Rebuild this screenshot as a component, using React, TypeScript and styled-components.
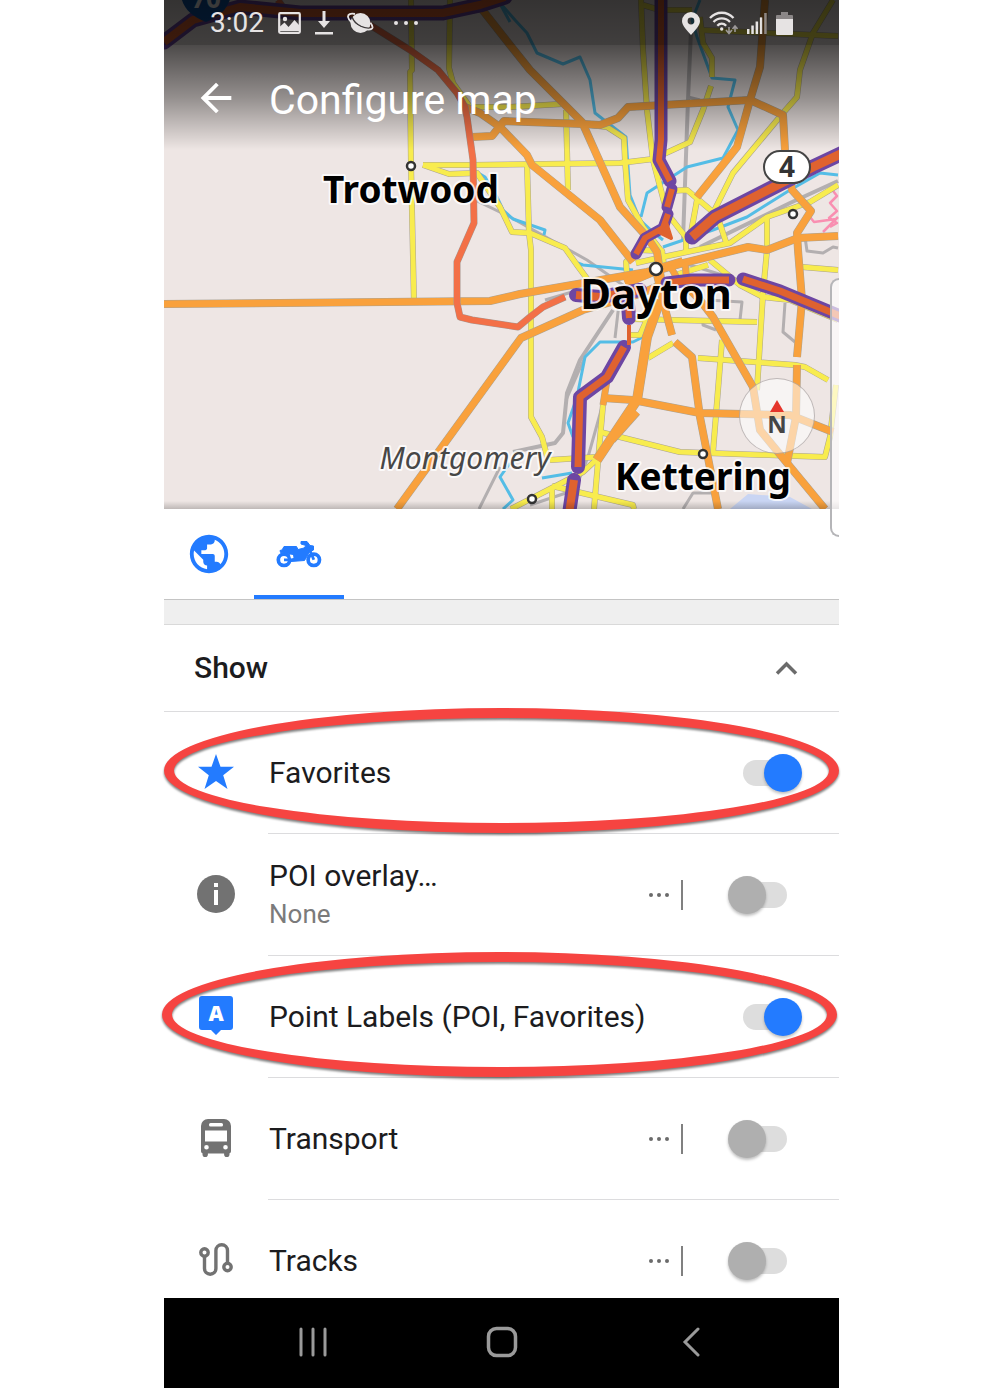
import React, { useState } from "react";
import styled, { createGlobalStyle } from "styled-components";
import { MdArrowBack, MdPublic } from "react-icons/md";

const GlobalStyle = createGlobalStyle`
  *, *::before, *::after { box-sizing: border-box; }
  body { margin: 0; background: #fff; }
  button { border: 0; padding: 0; background: none; font: inherit; color: inherit; cursor: pointer; }
  h1, h2 { margin: 0; font-weight: 400; }
`;

const Page = styled.div`
  height: 100vh;
  padding: 0 161px 0 164px;
  font-family: Roboto, "Noto Sans", sans-serif;
  color: #1c1c1e;

  @media (max-width: 700px) {
    padding: 0;
  }
`;

const Phone = styled.main`
  position: relative;
  display: flex;
  flex-direction: column;
  height: 100%;
  background: #fff;
`;

/* ---------- map ---------- */

const MapArea = styled.header`
  position: relative;
  flex: none;
  height: 509px;
  overflow: hidden;
  background: #eee6e4;
`;

const MapDrawing = styled.svg`
  position: absolute;
  inset: 0;
  width: 100%;
  height: 100%;
`;

const MapShade = styled.div`
  position: absolute;
  inset: 0;
  background:
    linear-gradient(rgba(0, 0, 0, 0.78), rgba(0, 0, 0, 0.73)) 0 0 / 100% 45px no-repeat,
    linear-gradient(rgba(0, 0, 0, 0.68), rgba(0, 0, 0, 0.38) 50%, rgba(0, 0, 0, 0)) 0 45px / 100% 105px no-repeat,
    linear-gradient(rgba(0, 0, 0, 0), rgba(0, 0, 0, 0.2)) 0 100% / 100% 8px no-repeat;
`;

const StatusBar = styled.div`
  position: relative;
  display: flex;
  align-items: center;
  justify-content: space-between;
  height: 46px;
  padding: 0 46px;
  color: #e6e3e3;
  font-size: 28px;
  line-height: 46px;
`;

const StatusGroup = styled.div<{ $gap: number }>`
  display: flex;
  align-items: center;
  gap: ${(p) => p.$gap}px;

  svg { display: block; }
`;

const StatusMore = styled.span`
  padding-left: 6px;
`;

const AppBar = styled.div`
  position: relative;
  display: flex;
  align-items: center;
  gap: 30px;
  height: 103px;
  padding-left: 29px;
  color: #fff;
`;

const BackButton = styled.button`
  display: grid;
  place-items: center;
  width: 46px;
  height: 46px;
`;

const Title = styled.h1`
  padding-top: 4px;
  font-size: 41px;
  line-height: 50px;
`;

const Compass = styled.button`
  position: absolute;
  right: 24px;
  top: 378px;
  width: 76px;
  height: 76px;
  padding-top: 4px;
  border: 1px solid rgba(120, 110, 110, 0.45);
  border-radius: 50%;
  background: rgba(255, 255, 255, 0.55);
  display: flex;
  flex-direction: column;
  align-items: center;
  justify-content: center;
  color: #454545;
  font: 700 24px/24px "Open Sans", "Noto Sans", sans-serif;
`;

const Needle = styled.span`
  border: 7px solid transparent;
  border-top: 0;
  border-bottom: 12px solid #e5352b;
`;

const EdgePanel = styled.div`
  position: absolute;
  right: 0;
  top: 278px;
  width: 9px;
  height: 259px;
  border: 2px solid #b5b5b8;
  border-right: 0;
  border-radius: 10px 0 0 10px;
  background: rgba(255, 255, 255, 0.65);
`;

/* ---------- profile tabs ---------- */

const Tabs = styled.nav`
  flex: none;
  display: flex;
  height: 91px;
  border-bottom: 1px solid #c4c4c4;
`;

const Tab = styled.button<{ $active: boolean }>`
  display: grid;
  place-items: center;
  width: 90px;
  border-top: 4px solid transparent;
  border-bottom: 4px solid ${(p) => (p.$active ? "#237bff" : "transparent")};
  color: #237bff;
`;

const Divider = styled.div`
  flex: none;
  height: 25px;
  background: #efefef;
  border-bottom: 1px solid #d9d9d9;
`;

/* ---------- list ---------- */

const SectionHeader = styled.button`
  flex: none;
  display: flex;
  align-items: center;
  justify-content: space-between;
  height: 87px;
  padding: 0 41px 0 30px;
  border-bottom: 1px solid #dcdcde;
  text-align: left;
`;

const SectionTitle = styled.h2`
  font-size: 30px;
  line-height: 38px;
  font-weight: 500;
`;

const List = styled.div`
  flex: 1;
  min-height: 0;
  overflow: clip;
  overflow-clip-margin: 6px;
`;

const Row = styled.div`
  position: relative;
  display: flex;
  height: 122px;
`;

const IconCell = styled.div<{ $on: boolean }>`
  flex: none;
  display: grid;
  place-items: center;
  width: 104px;
  padding-bottom: 2px;
  color: ${(p) => (p.$on ? "#237bff" : "#727272")};
`;

const RowBody = styled.div`
  flex: 1;
  display: flex;
  align-items: center;
  padding: 0 37px 0 1px;
  border-bottom: 1px solid #dcdcde;
`;

const RowLabel = styled.label`
  flex: 1;
  font-size: 30px;
  line-height: 38px;
`;

const RowNote = styled.span`
  display: block;
  color: #7b7b7b;
  font-size: 26px;
`;

const MoreButton = styled.button`
  display: flex;
  align-items: center;
  justify-content: space-between;
  width: 34px;
  height: 30px;
  margin-right: 45px;
  border-right: 2px solid #808080;
  color: #6b6b6b;
`;

const Switch = styled.input`
  appearance: none;
  position: relative;
  width: 74px;
  height: 38px;
  margin: 0;
  cursor: pointer;

  &::before {
    content: "";
    position: absolute;
    inset: 6px 15px;
    border-radius: 13px;
    background: #dddddd;
  }

  &::after {
    content: "";
    position: absolute;
    left: 0;
    top: 0;
    width: 38px;
    height: 38px;
    border-radius: 50%;
    background: #afafaf;
    box-shadow: 0 2px 3px rgba(0, 0, 0, 0.25);
  }

  &:checked::after {
    left: 36px;
    background: #237bff;
  }
`;

const Highlight = styled.div<{ $shift: number }>`
  position: absolute;
  z-index: 1;
  top: -4px;
  left: ${(p) => -p.$shift}px;
  right: ${(p) => p.$shift}px;
  height: 125px;
  border: 10px solid #f64441;
  border-radius: 50%;
  filter: drop-shadow(0 2px 1px rgba(0, 0, 0, 0.5));
  pointer-events: none;
`;

/* ---------- system navigation ---------- */

const NavBar = styled.nav`
  position: relative;
  z-index: 2;
  flex: none;
  display: flex;
  justify-content: center;
  height: 90px;
  background: #000;
`;

const NavButton = styled.button`
  display: grid;
  place-items: center;
  width: 189px;
  padding-bottom: 2px;
  color: #9a9a9a;
`;

/* ---------- map data ---------- */

type Road = [points: string, width?: number];

const yellow: Road[] = [
  ["411,0 412,70 410,72 411,165 414,303"],
  ["450,0 449,68 453,83 470,107 510,107 562,104"],
  ["423,165 473,165 620,163 653,159 690,142 703,110 711,86"],
  ["423,165 449,174 477,173 500,207 512,232 530,233 565,248 577,265 588,280"],
  ["527,163 529,233 531,250 531,417 542,437 548,460"],
  ["566,110 568,190"],
  ["590,125 607,127 624,138 625,160 628,200 643,227 663,253"],
  ["641,0 643,50 647,110 653,160 667,213 688,240"],
  ["643,5 660,10 692,10"],
  ["700,17 703,43 712,58 712,77"],
  ["700,30 838,36"],
  ["833,0 813,33 800,70 797,97 783,113 733,173 713,213"],
  ["667,191 687,190 713,212"],
  ["697,200 690,238"],
  ["838,185 810,202 767,217 730,243 663,257 636,263"],
  ["718,218 727,245"],
  ["767,217 767,250 763,293 757,390"],
  ["686,238 686,252"],
  ["636,250 626,262 627,275 633,280"],
  ["640,250 662,251 664,266"],
  ["672,276 708,265"],
  ["632,319 757,322"],
  ["698,358 795,365 805,367 828,380"],
  ["722,340 713,452"],
  ["648,358 673,343"],
  ["710,260 740,285 763,297 790,300 838,320"],
  ["802,267 838,270"],
  ["600,432 680,452 825,457 830,437 836,385"],
  ["603,405 599,450 594,509"],
  ["550,460 597,457"],
  ["511,509 583,472 596,460"],
  ["552,486 633,505 634,509"],
  ["552,488 552,509"],
  ["627,335 640,335 648,317"],
];

const orange: Road[] = [
  ["164,304 490,301 520,294 647,272 748,247 767,250 798,238 838,236", 7],
  ["397,509 505,360 521,338 583,310 640,294 672,280", 7],
  ["477,3 510,45 530,70 582,122 620,207 647,237 657,252 662,285", 7],
  ["465,107 480,113 500,127 527,155 532,165 600,220 633,262", 7],
  ["472,137 492,136 504,121 583,124 600,125 618,118 628,107 750,100 783,115 785,150 792,190 811,211 797,233 798,250 802,300 797,357", 7],
  ["765,0 760,67 750,100 737,147 697,197", 7],
  ["797,365 796,417 787,463", 7],
  ["690,290 700,300 713,317 753,387 760,430 787,463 825,509", 7],
  ["675,342 692,357 700,417 718,509", 7],
  ["603,398 633,400 700,413 790,415 833,432", 7],
  ["660,300 647,337 637,400 597,460", 9],
  ["637,412 612,440", 7],
  ["603,405 607,380 617,360", 6],
  ["656,270 664,305 672,335", 7],
  ["625,283 656,270 683,262", 9],
  ["670,266 680,283", 6],
  ["685,262 687,284", 6],
];

const blue: Road[] = [
  ["500,3 515,20 527,33 537,53 563,64 580,57 590,80 595,113 626,137 630,195 640,220 653,232 663,240"],
  ["641,217 647,193 687,167 723,158 738,130 728,107 735,80 712,78 697,37 692,20 700,0"],
  ["838,175 820,173 790,190 747,217 713,230 663,247"],
  ["470,168 485,177 497,197 503,210 513,219 545,230 544,235"],
  ["575,262 583,265 633,270"],
  ["643,337 633,342 600,342 585,357 577,397 568,423 573,437"],
  ["542,478 572,473"],
  ["510,463 500,477 513,500 503,509"],
  ["498,0 510,22"],
];

const gray: Road[] = [
  ["691,30 688,100 683,240", 4],
  ["688,97 700,100"],
  ["838,181 790,203 700,247", 4],
  ["475,200 510,217 587,260 630,290"],
  ["680,262 745,282"],
  ["613,310 580,360 567,393 563,433 555,443 513,452", 4],
  ["585,357 566,400"],
  ["500,467 479,509"],
  ["707,300 742,302 740,320"],
  ["703,318 703,325 716,330"],
  ["785,303 783,332 795,342"],
  ["602,407 588,457 575,490 530,505"],
  ["683,509 693,493 713,493"],
  ["805,237 807,251 823,253 833,247 838,248"],
  ["545,300 572,292"],
  ["620,295 615,338"],
];

const highways: { points: string; purple: number; core: number }[] = [
  { points: "164,42 193,20 240,7 300,13 443,13 480,5 505,-3", purple: 15, core: 8 },
  { points: "661,0 661,140 659,160 670,181", purple: 13, core: 6 },
  { points: "672,189 667,207", purple: 11, core: 6 },
  { points: "668,214 663,228 645,238 636,254", purple: 11, core: 6 },
  { points: "845,152 813,167 715,217 692,237", purple: 15, core: 9 },
  { points: "576,295 600,297 640,290", purple: 14, core: 8 },
  { points: "667,283 692,280 729,280", purple: 13, core: 7 },
  { points: "743,279 780,291 845,318", purple: 13, core: 7 },
  { points: "628,304 629,318", purple: 14, core: 6 },
  { points: "624,347 607,377 580,397 578,467", purple: 14, core: 7 },
  { points: "574,480 569,514", purple: 14, core: 8 },
];

const beltway = [
  "278,0 286,12",
  "345,13 370,25 410,50 438,70 457,93 465,107 467,117 473,160 474,223 457,262 457,303 460,317 472,320 518,327 530,317 543,307 565,297",
];

const towns: [number, number, number][] = [
  [411, 166, 4], [793, 214, 4], [656, 269, 6], [703, 454, 4], [532, 499, 4],
];

const Casing = ({ roads, width }: { roads: Road[]; width: number }) => (
  <>
    {roads.map(([points, w = width]) => (
      <polyline key={points} points={points} stroke="#a9a294" strokeWidth={w + 1} />
    ))}
  </>
);

const Roads = ({ roads, width, color }: { roads: Road[]; width: number; color: string }) => (
  <g stroke={color}>
    {roads.map(([points, w = width]) => (
      <polyline key={points} points={points} strokeWidth={w} />
    ))}
  </g>
);

function CityMap() {
  return (
    <MapDrawing viewBox="164 0 675 509" preserveAspectRatio="xMidYMid slice" role="img" aria-label="Map of Dayton">
      <path d="M730 509 748 494 790 497 812 509z" fill="#c9d5f3" />
      <g fill="none" strokeLinejoin="round">
        <Roads roads={gray} width={3} color="#b3afb0" />
        <Roads roads={blue} width={3} color="#54bde6" />
        <path d="M830 187l7 9-7 7 7 8-8 7 8 5-7 4M810 217l4 5 22-3M823 232l15-15" stroke="#f98fb1" strokeWidth="2.5" />
        <Casing roads={yellow} width={5} />
        <Roads roads={yellow} width={5} color="#f8ec4e" />
        <Casing roads={orange} width={7} />
        <Roads roads={orange} width={7} color="#f9a13c" />
        {beltway.map((points) => (
          <g key={points}>
            <polyline points={points} stroke="#a9948c" strokeWidth="7" />
            <polyline points={points} stroke="#f37047" strokeWidth="6" />
          </g>
        ))}
        <g strokeLinecap="round">
          {highways.map((h) => (
            <polyline key={h.points} points={h.points} stroke="#6d46a3" strokeWidth={h.purple} />
          ))}
        </g>
        {highways.map((h) => (
          <polyline key={h.points} points={h.points} stroke="#df622f" strokeWidth={h.core} />
        ))}
        <path d="M666 222l5 16-12-6zM629 325v20" fill="#df622f" stroke="#df622f" strokeWidth="4" />
      </g>

      <g fill="#fff" stroke="#333">
        {towns.map(([x, y, r]) => (
          <circle key={x} cx={x} cy={y} r={r} strokeWidth="2.5" />
        ))}
      </g>

      <path d="M181 -4c2 12 10 20 25 26 15-6 22-14 25-26z" fill="#0c55a8" />
      <rect x="764" y="151" width="46" height="32" rx="16" fill="#fff" stroke="#444" strokeWidth="2" />

      <g
        fontFamily='"Noto Sans", sans-serif'
        fontWeight="700"
        textAnchor="middle"
        stroke="#fff"
        strokeOpacity="0.8"
        strokeWidth="4"
        strokeLinejoin="round"
        paintOrder="stroke"
      >
        <text x="206" y="8" fontSize="26" fill="#fff" stroke="none">70</text>
        <text x="787" y="177" fontSize="28" fill="#333" stroke="none">4</text>
        <text x="411" y="203" fontSize="37">Trotwood</text>
        <text x="656" y="309" fontSize="42">Dayton</text>
        <text x="703" y="490" fontSize="37">Kettering</text>
        <text x="465" y="469" fontSize="30" fontWeight="400" fontStyle="italic" fill="#474747">Montgomery</text>
      </g>
    </MapDrawing>
  );
}

/* ---------- icons ---------- */

const Dots = ({ width, r }: { width: number; r: number }) => (
  <svg width={width} height="6" viewBox={`0 0 ${width} 6`} fill="currentColor" aria-hidden>
    <circle cx={r} cy="3" r={r} />
    <circle cx={width / 2} cy="3" r={r} />
    <circle cx={width - r} cy="3" r={r} />
  </svg>
);

const PictureIcon = () => (
  <svg width="23" height="22" viewBox="0 0 23 22" fill="none" aria-hidden>
    <rect x="1.2" y="1.2" width="20.6" height="19.6" rx="1" stroke="currentColor" strokeWidth="2.2" />
    <circle cx="7" cy="7" r="2.2" fill="currentColor" />
    <path d="M2 19V14.500l4.500-4 4 4.500 6-7 4.500 5v6z" fill="currentColor" />
  </svg>
);

const DownloadIcon = () => (
  <svg width="18" height="24" viewBox="0 0 18 24" fill="currentColor" aria-hidden>
    <path d="M7.5 0h3v10h4.500L9 17 3 10h4.500zM0 21h18v2.500H0z" />
  </svg>
);

const PlanetIcon = () => (
  <svg width="27" height="24" viewBox="0 0 27 24" fill="none" aria-hidden>
    <circle cx="13.500" cy="12" r="10" fill="currentColor" />
    <path d="M5 6c1.500 4 5 7.500 9 9.500 3.500 1.600 7 2.200 9.500 1.500" stroke="#3d393a" strokeWidth="1.500" />
    <path d="M8 3C3.500 2 .8 3.200 1 6c.4 3 5 7.500 12 10.500s11.800 2.500 12.500.3c.3-1.500-.5-3-2-5" stroke="currentColor" strokeWidth="1.800" />
  </svg>
);

const PinIcon = () => (
  <svg width="18" height="23" viewBox="0 0 18 23" aria-hidden>
    <path fillRule="evenodd" fill="currentColor" d="M9 0a9 9 0 0 1 9 9c0 5-5 9-9 14C5 18 0 14 0 9a9 9 0 0 1 9-9zm0 5.600a3.400 3.400 0 1 0 0 6.800 3.400 3.400 0 0 0 0-6.800z" />
  </svg>
);

const WifiIcon = () => (
  <svg width="29" height="24" viewBox="0 0 29 24" fill="none" stroke="currentColor" strokeWidth="2.300" aria-hidden>
    <path d="M1 7c6.500-7 17-7 23.500 0M4.500 11c4.600-4.800 12-4.800 16.500 0M8.300 14.700c2.600-2.600 6.300-2.600 8.900 0" />
    <circle cx="12.700" cy="18" r="1.700" fill="currentColor" stroke="none" />
    <path d="M20 16v6m-3-3 3 3.500 3-3.500M26 21v-6m-2.500 3 2.500-3 2.500 3" stroke="#9c9898" strokeWidth="1.600" />
  </svg>
);

const SignalIcon = () => (
  <svg width="20" height="21" viewBox="0 0 20 21" aria-hidden>
    <path d="M0 16h2.500v5H0zM4.300 12.500h2.500V21H4.300zM8.600 8.500h2.500V21H8.600z" fill="currentColor" />
    <path d="M12.900 4.500h2.500V21h-2.500zM17.200 0h2.500v21h-2.500z" fill="#8d8784" />
    <path d="M12.900 4.500h2V21h-2z" fill="currentColor" />
  </svg>
);

const BatteryIcon = () => (
  <svg width="17" height="23" viewBox="0 0 17 23" aria-hidden>
    <path d="M5 0h7v3h4a1 1 0 0 1 1 1v4H0V4a1 1 0 0 1 1-1h4z" fill="#8b8787" />
    <path d="M0 7h17v15a1 1 0 0 1-1 1H1a1 1 0 0 1-1-1z" fill="currentColor" />
  </svg>
);

const MotorcycleIcon = () => (
  <svg width="46" height="27" viewBox="0 0 46 27" fill="none" aria-hidden>
    <circle cx="8" cy="18.800" r="5.700" stroke="currentColor" strokeWidth="3.700" />
    <circle cx="37.800" cy="18.800" r="5.700" stroke="currentColor" strokeWidth="3.700" />
    <path
      d="M4.500 11.500 4 9.500 6 9l2-3.500h12.500L22 8.500l6-1.500 2-2.500-5-1.500V.5h6l3 4 3.500.5v4L33.500 11 28.500 19.500 15 20.500 12 12.500z"
      fill="currentColor"
      stroke="currentColor"
      strokeWidth="1"
      strokeLinejoin="round"
    />
    <path d="M8 18.800h8M34 9.500l3.800 9.300" stroke="currentColor" strokeWidth="2.800" />
    <path d="M13.800 13.500l3.200.5.500 3-2.500.500z" fill="#fff" />
  </svg>
);

const StarIcon = () => (
  <svg width="38" height="36" viewBox="0 0 38 36" fill="currentColor" aria-hidden>
    <path d="M19 0l4.500 12.800H37l-10.800 8.400L30.500 35 19 27 7.500 35l4.300-13.800L1 12.800h13.500z" />
  </svg>
);

const InfoIcon = () => (
  <svg width="38" height="38" viewBox="0 0 38 38" aria-hidden>
    <circle cx="19" cy="19" r="19" fill="currentColor" />
    <path d="M17 8h4v4h-4zM17 15h4v15h-4z" fill="#fff" />
  </svg>
);

const PointLabelIcon = () => (
  <svg width="34" height="40" viewBox="0 0 34 40" aria-hidden>
    <path d="M3 0h28a3 3 0 0 1 3 3v28a3 3 0 0 1-3 3h-9l-5 5-5-5H3a3 3 0 0 1-3-3V3a3 3 0 0 1 3-3z" fill="currentColor" />
    <text x="17" y="25" fill="#fff" fontFamily='"Open Sans", sans-serif' fontWeight="800" fontSize="21" textAnchor="middle">A</text>
  </svg>
);

const BusIcon = () => (
  <svg width="32" height="38" viewBox="0 0 32 38" aria-hidden>
    <path
      fillRule="evenodd"
      fill="currentColor"
      d="M8 0h16a7 7 0 0 1 7 7v25c0 1-.5 2-1.500 2.300V35.500a2.700 2.700 0 0 1-5.400 0v-1h-16.200v1a2.700 2.700 0 0 1-5.400 0v-1.200C1.500 34 1 33 1 32V7a7 7 0 0 1 7-7zm2.500 4A1.500 1.500 0 0 0 9 5.500v.5a1.500 1.500 0 0 0 1.500 1.500h11A1.500 1.500 0 0 0 23 6v-.5A1.500 1.500 0 0 0 21.500 4zM5 11.500v11h22v-11zM6.500 26a2.300 2.300 0 1 0 0 4.600 2.300 2.300 0 0 0 0-4.600zm19 0a2.300 2.300 0 1 0 0 4.600 2.300 2.300 0 0 0 0-4.600z"
    />
  </svg>
);

const TracksIcon = () => (
  <svg width="34" height="34" viewBox="0 0 34 34" fill="none" stroke="currentColor" strokeWidth="3.400" aria-hidden>
    <circle cx="5.500" cy="9.500" r="3.700" />
    <circle cx="28.500" cy="24" r="3.700" />
    <path d="M5.500 13v12.500a5.700 5.700 0 0 0 11.400 0V7.500a5.800 5.800 0 0 1 11.600 0V20.500" />
  </svg>
);

/* ---------- screen ---------- */

interface Item {
  id: string;
  label: string;
  note?: string;
  icon: React.ReactNode;
  more?: boolean;
  highlightShift?: number;
}

const items: Item[] = [
  { id: "favorites", label: "Favorites", icon: <StarIcon />, highlightShift: 0 },
  { id: "poi", label: "POI overlay…", note: "None", icon: <InfoIcon />, more: true },
  { id: "labels", label: "Point Labels (POI, Favorites)", icon: <PointLabelIcon />, highlightShift: 2 },
  { id: "transport", label: "Transport", icon: <BusIcon />, more: true },
  { id: "tracks", label: "Tracks", icon: <TracksIcon />, more: true },
];

export default function App() {
  const [enabled, setEnabled] = useState<Record<string, boolean>>({ favorites: true, labels: true });
  const [tab, setTab] = useState("motorcycle");
  const [open, setOpen] = useState(true);

  return (
    <Page>
      <GlobalStyle />
      <Phone>
        <MapArea>
          <CityMap />
          <MapShade />
          <StatusBar>
            <StatusGroup $gap={14}>
              <span>3:02</span>
              <PictureIcon />
              <DownloadIcon />
              <PlanetIcon />
              <StatusMore><Dots width={24} r={2} /></StatusMore>
            </StatusGroup>
            <StatusGroup $gap={9}>
              <PinIcon />
              <WifiIcon />
              <SignalIcon />
              <BatteryIcon />
            </StatusGroup>
          </StatusBar>
          <AppBar>
            <BackButton aria-label="Back"><MdArrowBack size={46} /></BackButton>
            <Title>Configure map</Title>
          </AppBar>
          <Compass aria-label="Compass, north up">
            <Needle />
            N
          </Compass>
        </MapArea>
        <EdgePanel />

        <Tabs aria-label="Profiles">
          <Tab $active={tab === "world"} aria-label="Browse map" onClick={() => setTab("world")}>
            <MdPublic size={46} />
          </Tab>
          <Tab $active={tab === "motorcycle"} aria-label="Motorcycle" onClick={() => setTab("motorcycle")}>
            <MotorcycleIcon />
          </Tab>
        </Tabs>
        <Divider />

        <SectionHeader aria-expanded={open} onClick={() => setOpen(!open)}>
          <SectionTitle>Show</SectionTitle>
          <svg width="23" height="14" viewBox="0 0 23 14" fill="none" stroke="#6b6b6b" strokeWidth="3.500" aria-hidden>
            <path d="M2 12.500l9.500-9.500 9.500 9.500" />
          </svg>
        </SectionHeader>

        <List>
          {open &&
            items.map((item) => (
              <Row key={item.id}>
                <IconCell $on={!!enabled[item.id]}>{item.icon}</IconCell>
                <RowBody>
                  <RowLabel htmlFor={item.id}>
                    {item.label}
                    {item.note && <RowNote>{item.note}</RowNote>}
                  </RowLabel>
                  {item.more && (
                    <MoreButton aria-label={`${item.label} options`}>
                      <Dots width={20} r={2} />
                    </MoreButton>
                  )}
                  <Switch
                    id={item.id}
                    type="checkbox"
                    role="switch"
                    checked={!!enabled[item.id]}
                    onChange={(e) => setEnabled({ ...enabled, [item.id]: e.target.checked })}
                  />
                </RowBody>
                {item.highlightShift !== undefined && <Highlight $shift={item.highlightShift} />}
              </Row>
            ))}
        </List>

        <NavBar aria-label="System">
          <NavButton aria-label="Recent apps">
            <svg width="28" height="30" viewBox="0 0 28 30" stroke="currentColor" strokeWidth="3" strokeLinecap="round" aria-hidden>
              <path d="M2 2v26M14 2v26M26 2v26" />
            </svg>
          </NavButton>
          <NavButton aria-label="Home">
            <svg width="32" height="32" viewBox="0 0 32 32" fill="none" stroke="currentColor" strokeWidth="3.500" aria-hidden>
              <rect x="2.500" y="2.500" width="27" height="27" rx="8" />
            </svg>
          </NavButton>
          <NavButton aria-label="Back">
            <svg width="18" height="30" viewBox="0 0 18 30" fill="none" stroke="currentColor" strokeWidth="3" strokeLinecap="round" aria-hidden>
              <path d="M16 2L3 15l13 13" />
            </svg>
          </NavButton>
        </NavBar>
      </Phone>
    </Page>
  );
}
